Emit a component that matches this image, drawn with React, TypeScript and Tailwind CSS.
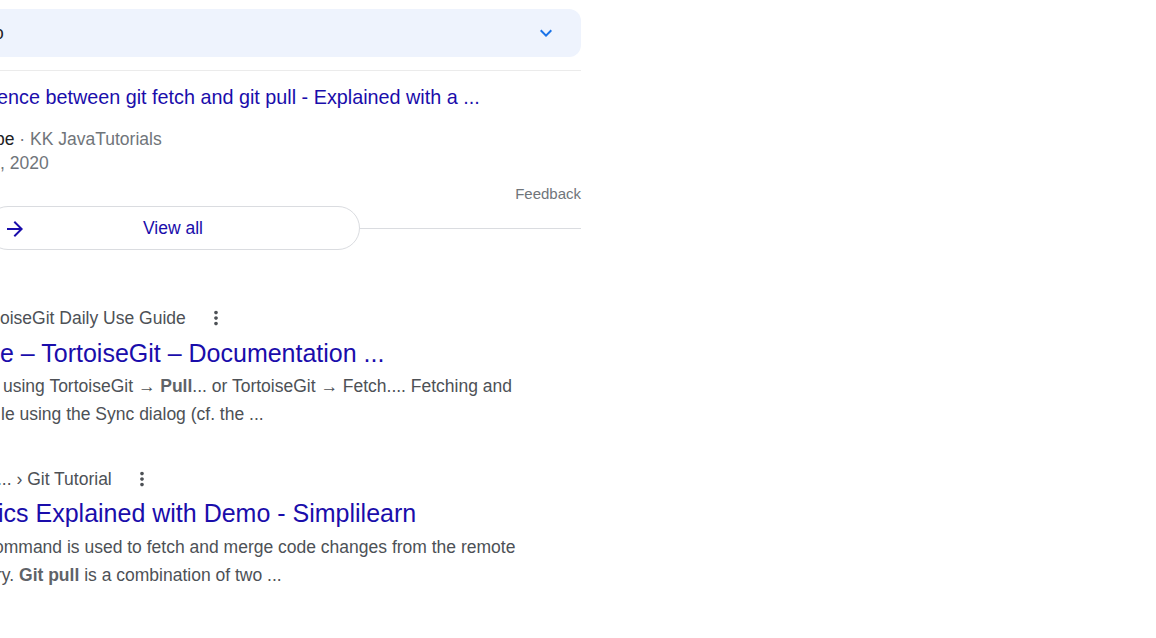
import React from "react";

function MoreVert() {
  return (
    <svg width="22" height="22" viewBox="0 0 24 24" className="shrink-0 ml-[19px] text-[#4d5156]" fill="currentColor">
      <path d="M12 8c1.1 0 2-.9 2-2s-.9-2-2-2-2 .9-2 2 .9 2 2 2zm0 2c-1.1 0-2 .9-2 2s.9 2 2 2 2-.9 2-2-.9-2-2-2zm0 6c-1.1 0-2 .9-2 2s.9 2 2 2 2-.9 2-2-.9-2-2-2z" />
    </svg>
  );
}

export default function App() {
  return (
    <div className="w-[1156px] h-[638px] overflow-hidden bg-white font-['Liberation_Sans',Arial,sans-serif] whitespace-nowrap">
      <div className="w-[581px] pt-[9px]">
        {/* expander */}
        <div className="h-[48px] rounded-r-[12px] bg-[#eef3fd] flex items-center justify-between pr-[23px] overflow-hidden">
          <span className="-ml-[6px] text-[17.5px] text-[#202124]">o</span>
          <svg width="24" height="24" viewBox="0 0 24 24" fill="#1a73e8">
            <path d="M16.59 8.59L12 13.17 7.41 8.59 6 10l6 6 6-6z" />
          </svg>
        </div>
        <div className="mt-[13px] h-px bg-[#ebebeb]" />

        {/* video result */}
        <div className="mt-[13px] -ml-[3px] text-[19.8px] leading-[26px] text-[#1a0dab]">
          ence between git fetch and git pull - Explained with a ...
        </div>
        <div className="mt-[17px] text-[17.5px] leading-[24px] text-[#70757a]">
          <div className="-ml-[5px]">
            <span className="text-[#202124]">be</span> · KK JavaTutorials
          </div>
          <div>, 2020</div>
        </div>
        <div className="mt-[9px] text-[15px] leading-[20px] text-[#70757a] text-right">Feedback</div>
        <div className="mt-[2px] -ml-[14px] w-[595px] flex items-center">
          <div className="relative w-[374px] h-[44px] shrink-0 rounded-full border border-[#dadce0] flex items-center justify-center">
            <svg width="24" height="24" viewBox="0 0 24 24" fill="#1a0dab" className="absolute left-[16px] top-[10px]">
              <path d="M12 4l-1.41 1.41L16.17 11H4v2h12.17l-5.58 5.59L12 20l8-8z" />
            </svg>
            <span className="text-[17.5px] text-[#1a0dab]">View all</span>
          </div>
          <div className="flex-1 h-px bg-[#dadce0]" />
        </div>

        {/* result 2 */}
        <div className="mt-[56px] flex items-center text-[17.5px] leading-[24px] text-[#4d5156]">
          <span>oiseGit Daily Use Guide</span>
          <MoreVert />
        </div>
        <div className="mt-[7px] text-[25px] leading-[32px] text-[#1a0dab]">
          e – TortoiseGit – Documentation ...
        </div>
        <div className="mt-[3px] text-[17.5px] leading-[28px] text-[#4d5156]">
          <div className="ml-[3px]">
            using TortoiseGit → <b className="text-[#5f6368]">Pull</b>... or TortoiseGit → Fetch.... Fetching and
          </div>
          <div className="ml-[1px]">le using the Sync dialog (cf. the ...</div>
        </div>

        {/* result 3 */}
        <div className="mt-[39px] flex items-center text-[17.5px] leading-[24px] text-[#4d5156]">
          <span className="-ml-[3px]">... › Git Tutorial</span>
          <MoreVert />
        </div>
        <div className="mt-[6px] -ml-[2px] text-[25px] leading-[32px] text-[#1a0dab]">
          ics Explained with Demo - Simplilearn
        </div>
        <div className="mt-[4px] text-[17.5px] leading-[28px] text-[#4d5156]">
          <div className="-ml-[6px]">ommand is used to fetch and merge code changes from the remote</div>
          <div className="-ml-[4px]">
            ry. <b className="text-[#5f6368]">Git pull</b> is a combination of two ...
          </div>
        </div>
      </div>
    </div>
  );
}
